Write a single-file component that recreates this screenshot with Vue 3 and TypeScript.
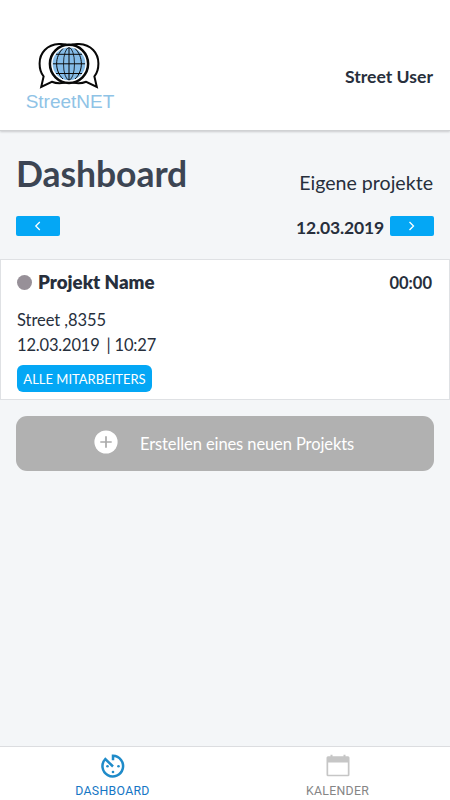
<script setup lang="ts">
import { ref } from 'vue'

interface Project {
  name: string
  address: string
  date: string
  time: string
  duration: string
}

const day = ref('12.03.2019')
const tab = ref<'dashboard' | 'calendar'>('dashboard')
const projects: Project[] = [
  { name: 'Projekt Name', address: 'Street ,8355', date: '12.03.2019', time: '10:27', duration: '00:00' },
]
</script>

<template>
  <div class="screen">
    <header class="header">
      <div class="brand">
        <svg class="logo" width="62" height="48" viewBox="0 0 62 48" fill="none" stroke="#080808" stroke-width="2">
          <path d="M31 3.600C28 2.200 24.500 1.900 21 2.100 9 2.800 1.600 10.800 1.600 21.500c0 6.500 2 10.500 4 12.900L3.200 45l10.600-5.200c5 2 10.700 2 17.200-.4" />
          <path d="M31 3.600c3-1.400 6.500-1.700 10-1.500 12 .7 19.400 8.700 19.400 19.400 0 6.500-2 10.500-4 12.900L58.800 45l-10.600-5.200c-5 2-10.700 2-17.200-.4" />
          <circle cx="31" cy="21.800" r="19.100" fill="#fff" stroke-width="2.500" />
          <circle cx="31" cy="21.800" r="16.400" fill="#85bce8" stroke="none" />
          <g stroke-width="1">
            <path d="M31 5.500v32.500M15 21.800h32M18 12.300h26M18 31.500h26" />
            <path d="M25 6.500c-8.500 8-8.500 22.500 0 30.500M37 6.500c8.500 8 8.500 22.500 0 30.500" />
            <ellipse cx="31" cy="21.800" rx="5.500" ry="16.200" stroke-width=".8" />
          </g>
        </svg>
        <span class="brand-name">StreetNET</span>
      </div>
      <span class="user">Street User</span>
    </header>

    <main class="content">
      <div class="heading">
        <h1>Dashboard</h1>
        <span class="subtitle">Eigene projekte</span>
      </div>
      <div class="dates">
        <button class="step" aria-label="Zurück">
          <svg width="8" height="10" viewBox="0 0 8 10"><path d="M5.800 1 1.800 5l4 4" /></svg>
        </button>
        <div class="current">
          <span class="day">{{ day }}</span>
          <button class="step" aria-label="Weiter">
            <svg width="8" height="10" viewBox="0 0 8 10"><path d="M1.500 1l4 4-4 4" /></svg>
          </button>
        </div>
      </div>

      <section v-for="p in projects" :key="p.name" class="card">
        <div class="card-head">
          <i class="dot"></i>
          <h2>{{ p.name }}</h2>
          <span class="duration">{{ p.duration }}</span>
        </div>
        <p class="address">{{ p.address }}</p>
        <p class="when"><span>{{ p.date }}</span><span class="time">| {{ p.time }}</span></p>
        <button class="staff"><span>ALLE MITARBEITERS</span></button>
      </section>

      <button class="create">
        <svg width="24" height="24" viewBox="0 0 24 24">
          <circle cx="12" cy="12" r="11.600" fill="#fff" />
          <path d="M12 6.300v11.400M6.300 12h11.400" stroke="#aaa" stroke-width="1.700" />
        </svg>
        <span>Erstellen eines neuen Projekts</span>
      </button>
    </main>

    <nav class="tabs">
      <button class="tab" :class="{ active: tab === 'dashboard' }" @click="tab = 'dashboard'">
        <svg width="26" height="26" viewBox="0 0 26 26" fill="none" stroke="#1f8bc9" stroke-width="2.500">
          <path d="M13 7.200V2.800A10.300 10.300 0 1 1 5.300 6l7.700 7.500" />
          <g fill="#1f8bc9" stroke="none"><circle cx="7.500" cy="13.300" r="1.300" /><circle cx="18.500" cy="13.300" r="1.300" /><circle cx="13" cy="19" r="1.300" /></g>
        </svg>
        <span>DASHBOARD</span>
      </button>
      <button class="tab" :class="{ active: tab === 'calendar' }" @click="tab = 'calendar'">
        <svg width="26" height="26" viewBox="0 0 26 26" fill="#c6c6c6">
          <path fill-rule="evenodd" d="M3 3.300h2.500V1.800h2v1.500h11V1.800h2v1.500H23a1.500 1.500 0 0 1 1.500 1.500v17a1.500 1.500 0 0 1-1.500 1.500H3a1.500 1.500 0 0 1-1.500-1.500v-17A1.500 1.500 0 0 1 3 3.300zM3.200 9.500v12.200h19.600V9.500z" />
        </svg>
        <span>KALENDER</span>
      </button>
    </nav>
  </div>
</template>

<style>
body { margin: 0; }
</style>

<style scoped>
.screen { display: flex; flex-direction: column; height: 800px; background: #f4f6f8; color: #272f3c; font-family: Lato, sans-serif; overflow: hidden; }
button { border: 0; padding: 0; margin: 0; font-family: inherit; cursor: pointer; }
h1, h2, p { margin: 0; }
.header { box-sizing: border-box; height: 131px; flex: none; display: flex; justify-content: space-between; padding: 42px 17px 0 25px; background: #fff; border-bottom: 1px solid #d0d2d4; box-shadow: 0 1px 2px #c9cbce; }
.brand { display: flex; flex-direction: column; align-items: center; width: 88px; }
.logo { display: block; }
.brand-name { font: 19px/24px "Liberation Sans", sans-serif; color: #8fc3e6; white-space: nowrap; margin-left: 2px; }
.user { font-size: 17.600px; line-height: 24px; font-weight: 700; margin-top: 23px; }
.content { flex: 1; }
.heading { display: flex; justify-content: space-between; height: 85px; padding: 0 17px 0 16px; box-sizing: border-box; }
h1 { font-size: 35.500px; line-height: 44px; font-weight: 700; color: #3c4553; padding-top: 21px; letter-spacing: -.050px; }
.subtitle { font-size: 19.600px; line-height: 26px; padding-top: 39px; }
.dates { display: flex; justify-content: space-between; height: 43px; padding: 0 16px; }
.current { display: flex; gap: 6px; }
.day { font-size: 17.500px; line-height: 23px; font-weight: 700; letter-spacing: -.150px; }
.step { width: 44px; height: 20px; border-radius: 2px; background: #04a7f5; display: flex; align-items: center; justify-content: center; }
.step svg { fill: none; stroke: #fff; stroke-width: 1.300; margin-bottom: 1px; }
.card { box-sizing: border-box; height: 141px; border: 1px solid #dfe1e4; background: #fff; padding: 11px 17px 0 16px; }
.card-head { display: flex; align-items: center; height: 24px; }
.dot { width: 15px; height: 15px; border-radius: 50%; background: #979098; margin: -2px 6px 0 0; }
h2 { font-size: 18.700px; line-height: 24px; font-weight: 800; flex: 1; margin-top: -2px; }
.duration { font-size: 16.500px; line-height: 24px; font-weight: 700; margin-top: -1px; }
.address { font-size: 16.500px; line-height: 24px; margin-top: 13px; letter-spacing: -.050px; }
.when { font-size: 16.500px; line-height: 24px; margin-top: 1px; display: flex; gap: 7px; letter-spacing: -.180px; }
.staff { display: flex; align-items: center; justify-content: center; width: 135px; height: 27px; margin-top: 8px; border-radius: 6px; background: #04a7f5; color: #fff; font-size: 13px; white-space: nowrap; }
.create { display: flex; align-items: center; width: 418px; height: 55px; margin: 16px 0 0 16px; padding: 0 0 3px 78px; border-radius: 11px; background: #b1b1b1; color: #fff; font-size: 16.500px; box-sizing: border-box; letter-spacing: -.100px; }
.create span { margin: 3px 0 0 22px; white-space: nowrap; }
.tabs { box-sizing: border-box; height: 54px; flex: none; border-top: 1px solid #dcdde0; background: #fff; display: flex; }
.tab { flex: 1; display: flex; flex-direction: column; align-items: center; background: none; padding-top: 6px; color: #858585; font: 12.300px/16px Roboto, sans-serif; letter-spacing: .300px; }
.tab svg { margin-bottom: 4px; }
.tab.active { color: #1576c4; }
</style>
